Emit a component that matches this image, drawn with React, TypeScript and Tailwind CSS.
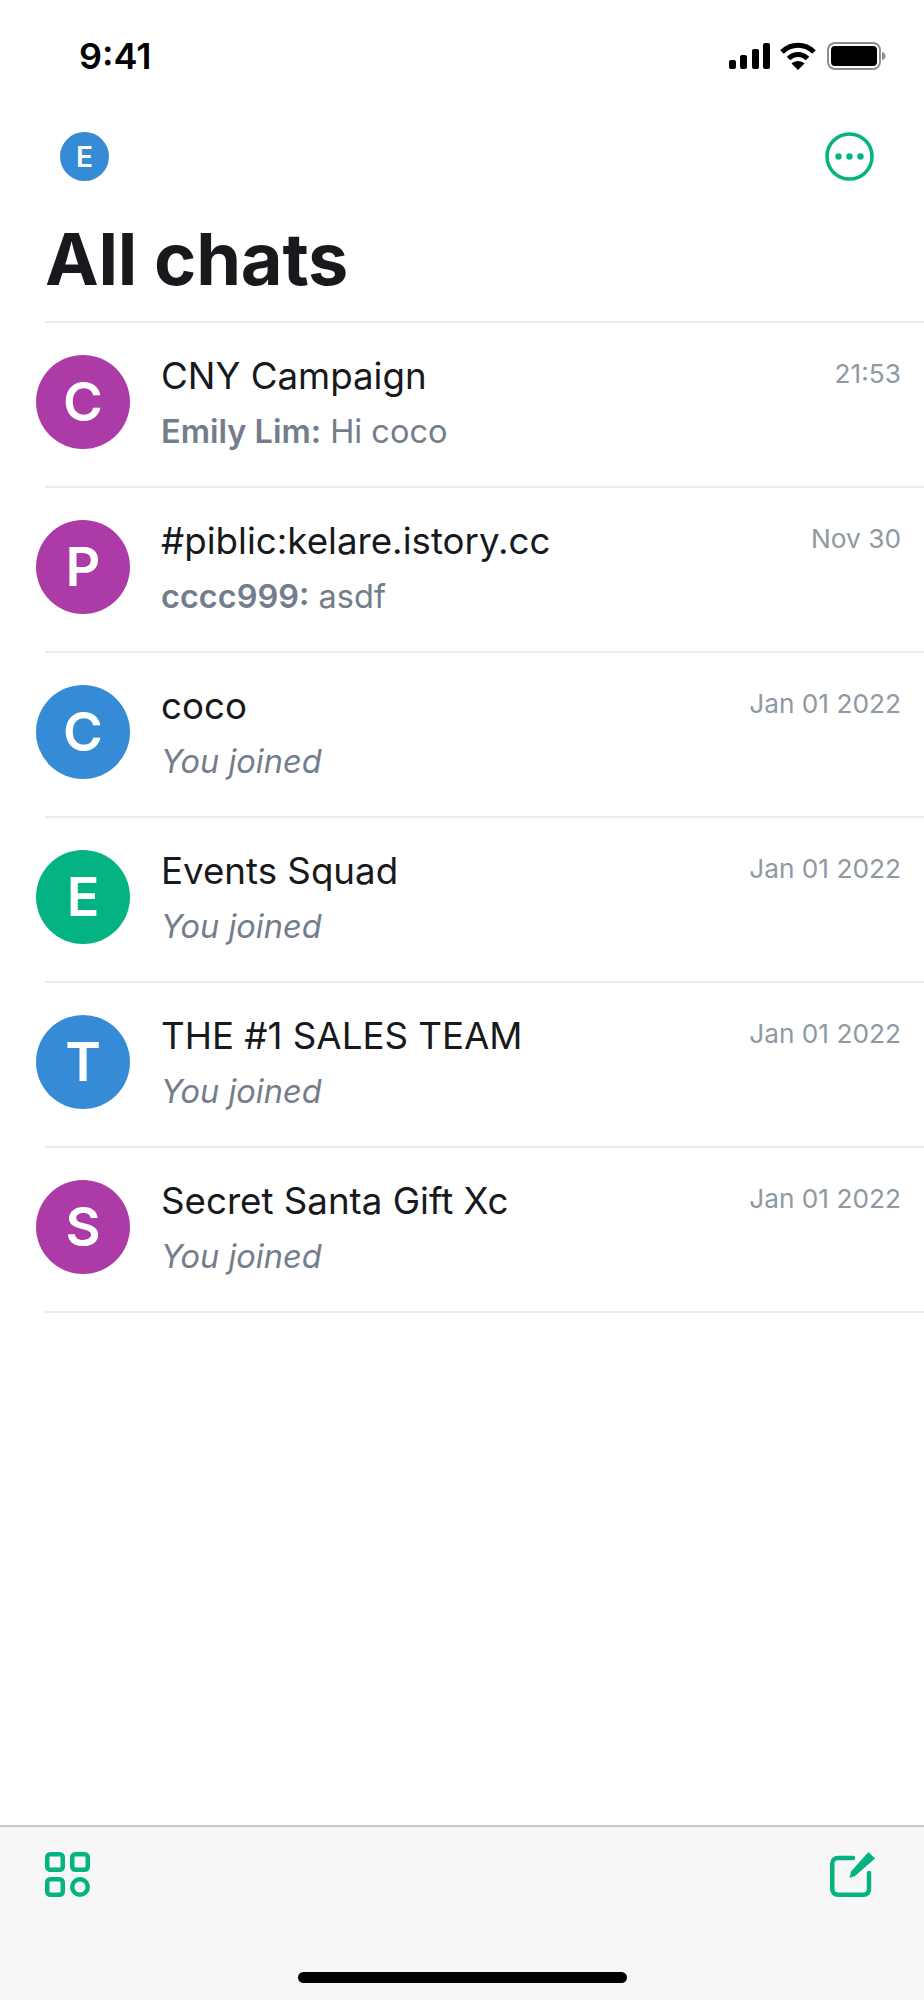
const chats = [
  { letter: "C", color: "bg-[#ac3ba8]", name: "CNY Campaign", sender: "Emily Lim:", text: "Hi coco", time: "21:53" },
  { letter: "P", color: "bg-[#ac3ba8]", name: "#piblic:kelare.istory.cc", sender: "cccc999:", text: "asdf", time: "Nov 30" },
  { letter: "C", color: "bg-[#368bd6]", name: "coco", text: "You joined", time: "Jan 01 2022" },
  { letter: "E", color: "bg-[#03b381]", name: "Events Squad", text: "You joined", time: "Jan 01 2022" },
  { letter: "T", color: "bg-[#368bd6]", name: "THE #1 SALES TEAM", text: "You joined", time: "Jan 01 2022" },
  { letter: "S", color: "bg-[#ac3ba8]", name: "Secret Santa Gift Xc", text: "You joined", time: "Jan 01 2022" },
];

function StatusBar() {
  return (
    <div className="flex h-[112px] items-center justify-between pl-[79px] pr-[38px]">
      <span className="text-[36px] font-semibold leading-none text-black">9:41</span>
      <div className="flex items-center">
        <svg width="42" height="26" viewBox="0 0 42 26" fill="#000" className="mr-[9px]">
          <rect x="0" y="17" width="7" height="9" rx="2" />
          <rect x="11" y="12" width="7" height="14" rx="2" />
          <rect x="23" y="6" width="7" height="20" rx="2" />
          <rect x="34" y="0" width="7" height="26" rx="2" />
        </svg>
        <svg width="36" height="28" viewBox="0 0 36 28" fill="none" stroke="#000" strokeWidth="5" className="mr-[11px]">
          <path d="M2 10C11 1 25 1 34 10" />
          <path d="M8.5 16.5C14 11 22 11 27.5 16.5" />
          <path d="M18 28L11.5 21.5C15 18 21 18 24.5 21.5Z" fill="#000" stroke="none" />
        </svg>
        <svg width="59" height="28" viewBox="0 0 59 28" fill="none">
          <rect x="1" y="1" width="52" height="26" rx="7" stroke="#8e8e8e" strokeWidth="2" />
          <rect x="4" y="4" width="46" height="20" rx="4" fill="#000" />
          <path d="M55 10C57.5 10.5 58.5 12 58.5 14C58.5 16 57.5 17.5 55 18Z" fill="#8e8e8e" />
        </svg>
      </div>
    </div>
  );
}

function Row({ chat }: { chat: (typeof chats)[number] }) {
  return (
    <div className="ml-[45px] flex h-[165px] border-b-2 border-[#ebebeb] pr-[23px]">
      <div className={`-ml-[9px] mt-[32px] flex h-[94px] w-[94px] shrink-0 items-center justify-center rounded-full ${chat.color} text-[54px] font-semibold leading-none text-white`}>
        {chat.letter}
      </div>
      <div className="ml-[31px] flex min-w-0 flex-1 flex-col pt-[29px]">
        <div className="flex items-start justify-between">
          <span className="text-[36.7px] leading-[48px] text-[#17191c]">{chat.name}</span>
          <span className="pt-[4px] text-[26.25px] leading-[36px] text-[#8e99a4]">{chat.time}</span>
        </div>
        <div className="mt-[10px] text-[32.5px] leading-[44px] text-[#737d8c]">
          {chat.sender ? (
            <>
              <span className="font-semibold">{chat.sender}</span> {chat.text}
            </>
          ) : (
            <span className="italic">{chat.text}</span>
          )}
        </div>
      </div>
    </div>
  );
}

export default function App() {
  return (
    <div className="flex h-[2000px] w-[924px] flex-col bg-white font-['Inter',sans-serif]">
      <StatusBar />
      <div className="flex items-center justify-between pl-[60px] pr-[50px] pt-[20px]">
        <div className="flex h-[49px] w-[49px] items-center justify-center rounded-full bg-[#368bd6] text-[28px] font-semibold leading-none text-white">
          E
        </div>
        <svg width="49" height="49" viewBox="0 0 49 49" fill="none">
          <circle cx="24.5" cy="24.5" r="22.5" stroke="#03b381" strokeWidth="3.5" />
          <circle cx="13.5" cy="24.5" r="3.2" fill="#03b381" />
          <circle cx="24.5" cy="24.5" r="3.2" fill="#03b381" />
          <circle cx="35.5" cy="24.5" r="3.2" fill="#03b381" />
        </svg>
      </div>
      <h1 className="pl-[45px] pt-[42px] text-[72px] font-bold leading-[72px] tracking-[-0.2px] text-[#17191c]">All chats</h1>
      <div className="ml-[45px] mt-[26px] border-b-2 border-[#ebebeb]" />
      <div className="flex flex-1 flex-col">
        {chats.map((chat, i) => (
          <Row key={i} chat={chat} />
        ))}
      </div>
      <div className="flex h-[175px] flex-col border-t-2 border-[#c8c8c8] bg-[#f7f7f7]">
        <div className="flex items-start justify-between pl-[45px] pr-[48px] pt-[25px]">
          <svg width="45" height="45" viewBox="0 0 45 45" fill="none" stroke="#03b381" strokeWidth="4.5">
            <rect x="2.25" y="2.25" width="15.5" height="15.5" rx="3" />
            <rect x="27.25" y="2.25" width="15.5" height="15.5" rx="3" />
            <rect x="2.25" y="27.25" width="15.5" height="15.5" rx="3" />
            <circle cx="35" cy="35" r="7.75" />
          </svg>
          <svg width="46" height="45" viewBox="0 0 46 45" fill="none">
            <path d="M23 6H8C4.5 6 2.25 8.2 2.25 11.5V37C2.25 40.5 4.5 42.75 8 42.75H33.5C37 42.75 39 40.5 39 37V21" stroke="#03b381" strokeWidth="4.5" strokeLinecap="round" />
            <path d="M38.5 0L45 6.5L25 24L19.5 26L21 19.5Z" fill="#03b381" />
          </svg>
        </div>
        <div className="mx-auto mt-[75px] h-[11px] w-[329px] rounded-full bg-black" />
      </div>
    </div>
  );
}
